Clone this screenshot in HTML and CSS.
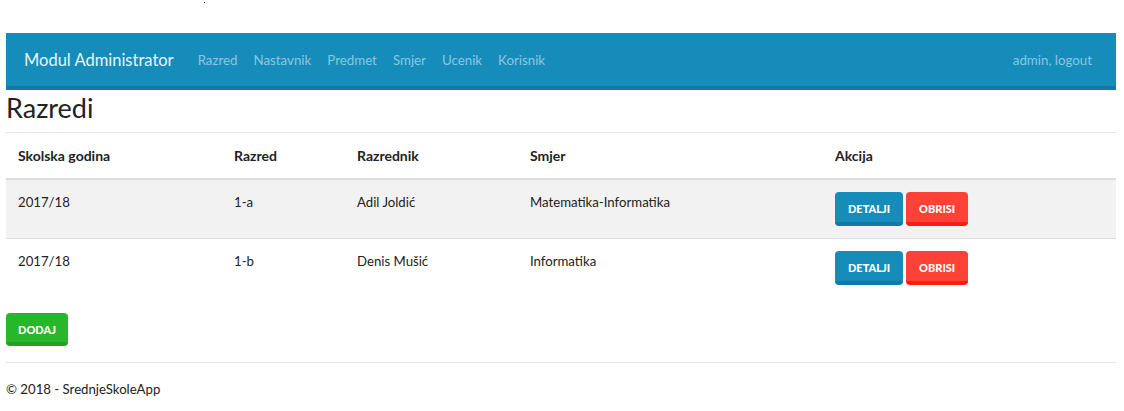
FILE: index.html
```html
<!DOCTYPE html>
<html>
<head>
<meta charset="utf-8">
<link rel="stylesheet" href="styles.css">
</head>
<body>
<div class="top-strip"><span class="dot"></span></div>
<div class="container">
  <nav class="navbar">
    <a class="brand" href="#">Modul Administrator</a>
    <ul class="nav-links">
      <li><a href="#">Razred</a></li>
      <li><a href="#">Nastavnik</a></li>
      <li><a href="#">Predmet</a></li>
      <li><a href="#">Smjer</a></li>
      <li><a href="#">Ucenik</a></li>
      <li><a href="#">Korisnik</a></li>
    </ul>
    <div class="nav-right"><a href="#">admin, logout</a></div>
  </nav>

  <h2 class="page-title">Razredi</h2>

  <table class="table">
    <colgroup>
      <col class="c1"><col class="c2"><col class="c3"><col class="c4"><col class="c5">
    </colgroup>
    <thead>
      <tr>
        <th>Skolska godina</th>
        <th>Razred</th>
        <th>Razrednik</th>
        <th>Smjer</th>
        <th>Akcija</th>
      </tr>
    </thead>
    <tbody>
      <tr class="odd">
        <td>2017/18</td>
        <td>1-a</td>
        <td>Adil Joldić</td>
        <td>Matematika-Informatika</td>
        <td><div class="actions"><a class="btn btn-primary" href="#">Detalji</a><a class="btn btn-danger" href="#">Obrisi</a></div></td>
      </tr>
      <tr>
        <td>2017/18</td>
        <td>1-b</td>
        <td>Denis Mušić</td>
        <td>Informatika</td>
        <td><div class="actions"><a class="btn btn-primary" href="#">Detalji</a><a class="btn btn-danger" href="#">Obrisi</a></div></td>
      </tr>
    </tbody>
  </table>

  <div class="add-row"><a class="btn btn-success" href="#">Dodaj</a></div>

  <hr class="footer-rule">
  <footer class="footer">© 2018 - SrednjeSkoleApp</footer>
</div>
</body>
</html>
```

FILE: styles.css
```css
* { box-sizing: border-box; }

html, body {
  margin: 0;
  padding: 0;
  background: #fff;
}

body {
  font-family: "Lato", "Open Sans", sans-serif;
  font-size: 13.2px;
  line-height: 1.5;
  color: #222;
}

a { text-decoration: none; }

.top-strip {
  height: 33px;
  position: relative;
}

.dot {
  position: absolute;
  left: 204px;
  top: 2px;
  width: 1px;
  height: 1px;
  background: #33337a;
}

.container {
  width: 1110px;
  margin: 0 6px;
}

/* Navbar */
.navbar {
  display: flex;
  align-items: center;
  height: 57px;
  background: #158cba;
  border-bottom: 4px solid #127ba3;
  padding: 2px 24px 0 18px;
}

.brand {
  font-size: 16.5px;
  color: #e8f5fb;
  margin-right: 16px;
}

.nav-links {
  display: flex;
  list-style: none;
  margin: 0;
  padding: 0;
}

.nav-links a {
  display: block;
  padding: 0 8px;
  color: #8fc6de;
  font-size: 13.3px;
}

.nav-right {
  margin-left: auto;
}

.nav-right a {
  color: #8fc6de;
  font-size: 13.3px;
}

/* Title */
.page-title {
  font-size: 27px;
  font-weight: 400;
  line-height: 1.2;
  margin: 2px 0 0;
  padding-bottom: 8px;
  border-bottom: 1px solid #e5e5e5;
}

/* Table */
.table {
  width: 100%;
  border-collapse: collapse;
  table-layout: fixed;
}

.c1 { width: 216px; }
.c2 { width: 123px; }
.c3 { width: 173px; }
.c4 { width: 305px; }
.c5 { width: auto; }

.table th,
.table td {
  padding: 12px;
  text-align: left;
  vertical-align: top;
  line-height: 21px;
}

.table th {
  font-size: 14px;
  font-weight: 700;
  border-bottom: 2px solid #dddddd;
}

.table td {
  border-bottom: 1px solid #dddddd;
}

.table tbody tr:last-child td {
  border-bottom: none;
}

.table tr.odd td {
  background: #f2f2f2;
}

.actions {
  display: flex;
  gap: 3px;
}

/* Buttons */
.btn {
  display: inline-flex;
  align-items: center;
  justify-content: center;
  height: 34px;
  padding: 3px 13px 0;
  font-size: 11px;
  font-weight: 900;
  line-height: 1;
  text-transform: uppercase;
  color: #fff;
  border-radius: 4px;
  border-bottom: 4px solid transparent;
}

.btn-primary {
  background: #158cba;
  border-bottom-color: #127ba3;
}

.btn-danger {
  background: #ff4136;
  border-bottom-color: #ff1d13;
}

.btn-success {
  background: #28b62c;
  border-bottom-color: #23a127;
}

.add-row {
  padding-top: 16px;
}

.add-row .btn {
  height: 33px;
  width: 62px;
}

.footer-rule {
  border: 0;
  border-top: 1px solid #e5e5e5;
  margin: 16px 0 0;
}

.footer {
  padding-top: 17px;
  font-size: 13.2px;
}
```
